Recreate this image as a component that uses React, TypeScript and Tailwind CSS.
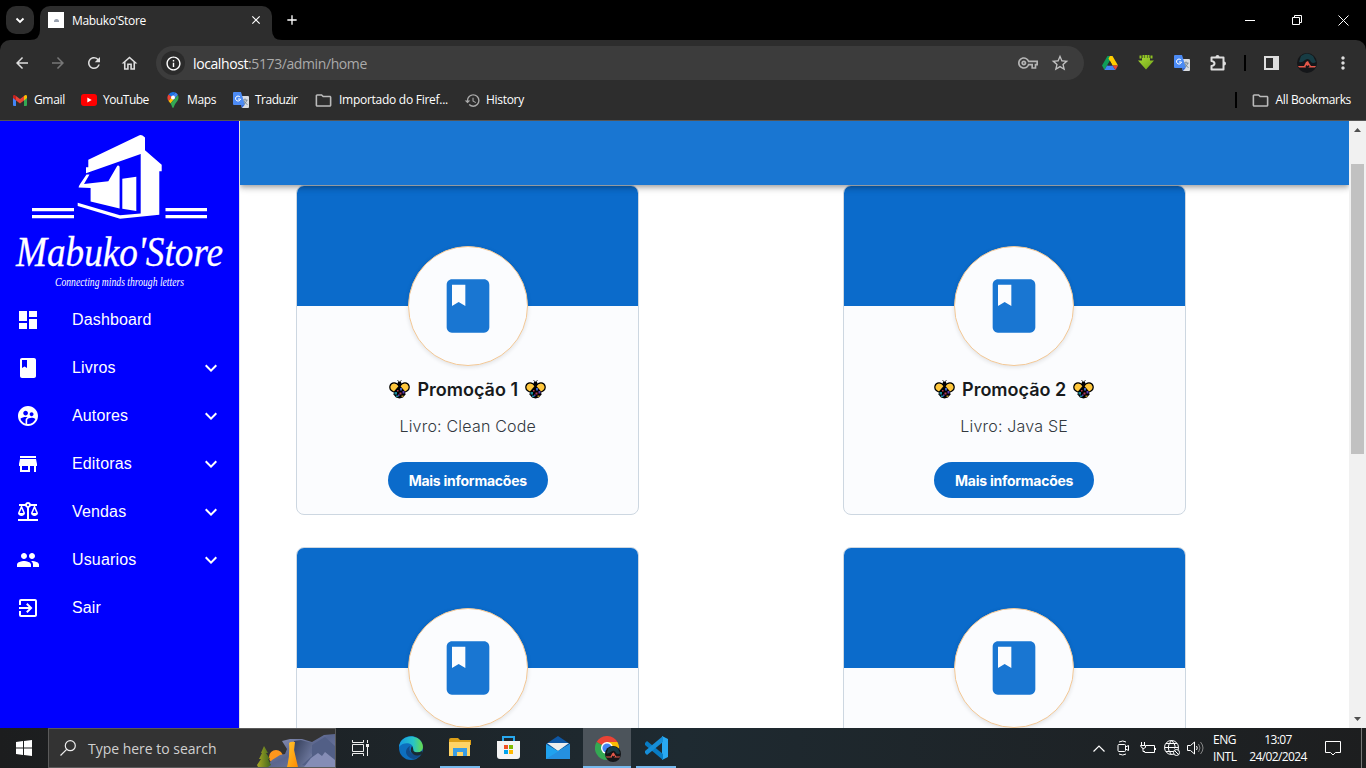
import type { ReactNode } from "react";
import {
  MdArrowBack, MdArrowForward, MdBalance, MdBook, MdClose, MdDashboard, MdExitToApp, MdExpandMore,
  MdHistory, MdInfoOutline, MdMoreVert, MdOutlineFolder, MdOutlineHome, MdPeople, MdRefresh,
  MdStarOutline, MdStore, MdSupervisedUserCircle, MdAdd, MdOutlineVpnKey,
} from "react-icons/md";

function GmailIcon() {
  return (
    <svg className="h-[11px] w-[14px]" viewBox="0 0 28 22">
      <path d="M0 4v16q0 2 2 2h4V9z" fill="#4285f4" />
      <path d="M22 9v13h4q2 0 2-2V4z" fill="#34a853" />
      <path d="M0 3v3l6 5V2C3-1 0 0 0 3z" fill="#c5221f" />
      <path d="M28 3v3l-6 5V2c3-3 6-2 6 1z" fill="#fbbc04" />
      <path d="M6 2l8 6 8-6v9l-8 6-8-6z" fill="#ea4335" />
    </svg>
  );
}

function YoutubeIcon() {
  return (
    <svg className="h-3 w-4" viewBox="0 0 16 12">
      <rect width="16" height="12" rx="3" fill="#f00" />
      <path d="M6.3 3.5v5L10.7 6z" fill="#fff" />
    </svg>
  );
}

function MapsIcon() {
  return (
    <svg className="h-4 w-3" viewBox="0 0 24 32">
      <path d="M12 0A11 11 0 0 0 3 5l6 5 8-9q-2-1-5-1z" fill="#1a73e8" />
      <path d="M3 5C0 9 0 14 3 18l7-8z" fill="#ea4335" />
      <path d="M17 1l-8 9 3 7 10-11q-2-4-5-5z" fill="#4285f4" />
      <path d="M3 18l4 5 6-7-4-5z" fill="#fbbc04" />
      <path d="M22 6c3 8-1 12-5 17-3 4-3 9-5 9s-2-5-5-9z" fill="#34a853" />
      <circle cx="12" cy="11" r="4" fill="#fff" />
    </svg>
  );
}

function TranslateIcon() {
  return (
    <svg className="size-4" viewBox="0 0 32 32">
      <path d="M12 8h18q2 0 2 2v20q0 2-2 2H18z" fill="#dadce0" />
      <path d="M2 0h14l8 26H2q-2 0-2-2V2q0-2 2-2z" fill="#4c8bf5" />
      <path d="M16 26h7l-5 6z" fill="#3367d6" />
      <path d="M14 10a5 5 0 1 0 1 4h-5" fill="none" stroke="#fff" strokeWidth="2" />
      <path d="M20 16h9M24 13v3m4 0q-2 6-7 8m1-6q2 5 7 7" fill="none" stroke="#687c8c" strokeWidth="1.7" />
    </svg>
  );
}

function DriveIcon() {
  return (
    <svg className="h-[14px] w-4" viewBox="0 0 32 28">
      <path d="M11 0h10l-5 9-6 10-5 9-5-9z" fill="#0f9d58" />
      <path d="M16 0h5l11 19H21L13 5z" fill="#ffcd00" />
      <path d="M10 19h11l6 9H5z" fill="#4285f4" />
      <path d="M27 28l-6-9h11z" fill="#ea4335" />
      <path d="M16 10l5 9H11z" fill="#2d2d2d" />
    </svg>
  );
}

function DownloadIcon() {
  return (
    <svg className="h-4 w-4" viewBox="0 0 16 16">
      <defs><linearGradient id="arrow" y2="1"><stop stopColor="#a6d834" /><stop offset="1" stopColor="#6fa318" /></linearGradient></defs>
      <path d="M4 3h8v2.500h4L8 14.500 0 5.500h4z" fill="url(#arrow)" />
      <path d="M1.500.5h2v3h-2zM4.500 0h2v3h-2zM7 0h2v3H7zM9.500 0h2v3h-2zM12.500.5h2v3h-2z" fill="#8fc322" />
    </svg>
  );
}

function ExtensionIcon() {
  return (
    <svg className="ml-[20px] h-[18px] w-[17px]" viewBox="0 0 17 18" fill="none" stroke="#dedede" strokeWidth="2">
      <path d="M1.500 3.500h12v12h-12V12q3-.5 3-2.500t-3-2.500z" strokeLinejoin="round" />
      <path d="M5.500 3a2 2 0 0 1 4 0zM14 7.500a2 2 0 0 1 0 4z" fill="#dedede" stroke="none" />
    </svg>
  );
}

function AvatarIcon({ className }: { className: string }) {
  return (
    <svg className={className} viewBox="0 0 20 20">
      <circle cx="10" cy="10" r="10" fill="#141619" />
      <path d="M4 3q6-5 12 0l3 6q-3 2-5 0-2-5-6-2-3 3-6 2z" fill="#173c44" />
      <path d="M1 13h6l2-4 2-1 1 2 2 3h5l-1 1.500H2z" fill="#e4584a" />
      <path d="M8.500 13.500l1-1.500 1 1 1.500-1 .5 1.500-1.500 1.500H9z" fill="#141619" />
    </svg>
  );
}

function StoreLogo() {
  return (
    <svg className="block h-[175px] w-[239px] shrink-0 overflow-visible" viewBox="0 0 239 175" fill="#fff">
      <path fillRule="evenodd" d="M88.300 38.700L139.500 14.200q1.500-.7 3 .4l2.500 2v12.700l16.700 14.400v6.600h-2.400v43.400L120 97.700 77.700 85v-3.300l42.300 12.500 20.700-1.700V33L86 52.300v-6h2.300z" />
      <path d="M86.500 53.500h3L84 63l24.300-2.700 9-15.600q2.300-.7 2.300 1.500v41.200l-29-7V67l-12-.5q0-1.500 1.500-3.500z" />
      <path d="M122.300 57.700l14-2V90l-14-2.300z" />
      <path d="M32 87h42v3.200H32zM32 94h42v3.200H32zM165.500 87H207v3.200h-41.500zM165.500 94H207v3.200h-41.500z" />
      <text x="16" y="145" textLength="207" lengthAdjust="spacingAndGlyphs" fontFamily="Liberation Serif, serif" fontStyle="italic" fontSize="43" stroke="#fff" strokeWidth=".3">Mabuko'Store</text>
      <text x="55" y="165" textLength="129" lengthAdjust="spacingAndGlyphs" fontFamily="Liberation Serif, serif" fontStyle="italic" fontSize="11.5">Connecting minds through letters</text>
    </svg>
  );
}

function BeeIcon() {
  return (
    <svg className="h-5 w-[21px]" viewBox="0 0 42 40">
      <path d="M20 6l-3-4M22 6l3-4" stroke="#555" strokeWidth="2" />
      <path d="M20 14C15 5 4 6 2 14s5 12 12 13h14c7-1 14-5 12-13S27 5 22 14z" fill="#ffc73c" stroke="#000" strokeWidth="2.500" />
      <circle cx="21" cy="9" r="4" />
      <path d="M21 12l7 8 4 5 1 6-5 6-7 2-7-2-5-6 1-6 4-5z" />
      <path d="M11 26h5v5h-5zM14 33h5v3h-5z" fill="#17889a" />
      <path d="M22 18h4v5h-4z" fill="#3b5dc0" />
      <path d="M21 27h4v4h-4zM16 22h3v3h-3z" fill="#b33a52" />
      <path d="M27 24h4v5h-4zM18 31h3v3h-3z" fill="#5a3bb0" />
      <path d="M25 33h4v3h-4z" fill="#b9912f" />
    </svg>
  );
}

function Bookmark({ icon, label, className }: { icon: ReactNode; label: string; className: string }) {
  return (
    <div className={`flex shrink-0 items-center whitespace-nowrap ${className}`}>
      {icon}
      <span>{label}</span>
    </div>
  );
}

function Browser() {
  return (
    <header className="h-[121px] shrink-0 bg-black font-['Open_Sans',sans-serif] text-white">
      <div className="flex h-10 items-end">
        <div className="mb-1.5 ml-1.5 flex size-7 items-center justify-center rounded-[10px] bg-[#2d2d2d]">
          <svg className="size-[10px]" viewBox="0 0 10 10"><path d="M1.500 3.500L5 7l3.500-3.500" fill="none" stroke="white" strokeWidth="1.800" /></svg>
        </div>
        <svg className="-ml-1 size-[10px]" viewBox="0 0 10 10"><path d="M10 0v10H0Q10 10 10 0" fill="#2d2d2d" /></svg>
        <div className="flex h-[34px] w-[232px] items-center rounded-t-[10px] bg-[#2d2d2d] pb-[6px] pl-2 text-[12px]">
          <div className="flex size-4 items-center justify-center bg-white"><div className="h-[3px] w-[5px] rounded-t bg-gray-400" /></div>
          <span className="ml-2 w-[177px] pt-px tracking-[-0.350px]">Mabuko'Store</span>
          <MdClose className="size-[14px]" />
        </div>
        <svg className="size-[10px]" viewBox="0 0 10 10"><path d="M0 0v10h10Q0 10 0 0" fill="#2d2d2d" /></svg>
        <MdAdd className="mb-[12px] ml-[2px] size-4" />
        <div className="mb-[14px] ml-auto mr-[17px] flex items-center">
          <div className="mr-[36px] h-px w-[10px] bg-white" />
          <svg className="mr-[35px] size-[12px]" viewBox="0 0 12 12" fill="none" stroke="#fff"><path d="M1.500 3.500h7v7h-7zM3.500 3.500v-2h7v7h-2" /></svg>
          <svg className="size-[11px]" viewBox="0 0 11 11" stroke="#fff"><path d="M.5.5l10 10M10.500.5l-10 10" /></svg>
        </div>
      </div>
      <div className="h-[81px] rounded-t-[10px] border-b border-[#555] bg-[#2d2d2d]">
        <div className="flex h-[46px] items-center pl-[13px] text-[#dedede]">
          <MdArrowBack className="size-[18px]" />
          <MdArrowForward className="ml-[18px] size-[18px] text-[#777]" />
          <MdRefresh className="ml-[18px] size-[18px]" />
          <MdOutlineHome className="ml-[17px] size-[19px]" />
          <div className="ml-[17px] flex h-[34px] w-[928px] items-center rounded-full bg-[#3c3c3c] pl-[5px]">
            <div className="flex size-6 items-center justify-center rounded-full bg-[#2b2b2b]"><MdInfoOutline className="size-[17px] text-white" /></div>
            <span className="ml-2 w-[825px] text-[14px] tracking-[-0.400px] text-[#aaa]"><span className="text-white">localhost</span>:5173/admin/home</span>
            <MdOutlineVpnKey className="size-[20px] text-[#b5b5b5]" />
            <MdStarOutline className="ml-[12px] size-[20px] text-[#c0c0c0]" />
          </div>
          <div className="ml-[18px] flex items-center">
            <DriveIcon />
            <div className="ml-5"><DownloadIcon /></div>
            <div className="ml-5"><TranslateIcon /></div>
            <ExtensionIcon />
            <div className="ml-[17px] h-4 w-[2px] bg-black" />
            <svg className="ml-[18px] h-[14px] w-[15px]" viewBox="0 0 15 14"><path d="M1 1h13v12H1z" fill="none" stroke="#ddd" strokeWidth="2" /><path d="M9 1h5v12H9z" fill="#ddd" /></svg>
            <AvatarIcon className="ml-[18px] size-5" />
            <MdMoreVert className="ml-[16px] size-[20px]" />
          </div>
        </div>
        <div className="flex h-[28px] items-center text-[12px] tracking-[-0.350px]">
          <Bookmark className="ml-[13px] w-[68px] gap-[7px]" icon={<GmailIcon />} label="Gmail" />
          <Bookmark className="w-[86px] gap-[6px] tracking-[-0.500px]" icon={<YoutubeIcon />} label="YouTube" />
          <Bookmark className="w-[66px] gap-[8px]" icon={<MapsIcon />} label="Maps" />
          <Bookmark className="w-[81px] gap-[6px] tracking-[-0.500px]" icon={<TranslateIcon />} label="Traduzir" />
          <Bookmark className="w-[150px] gap-[6px] tracking-[-0.270px]" icon={<MdOutlineFolder className="size-[19px] text-[#bbb]" />} label="Importado do Firef..." />
          <Bookmark className="gap-[5px] tracking-[-0.300px]" icon={<MdHistory className="size-[17px] text-[#aaa]" />} label="History" />
          <div className="ml-auto h-4 w-[2px] bg-black" />
          <Bookmark className="ml-[14px] mr-[15px] gap-[6px] tracking-[-0.350px]" icon={<MdOutlineFolder className="size-[19px] text-[#bbb]" />} label="All Bookmarks" />
        </div>
      </div>
    </header>
  );
}

const menu = [
  { label: "Dashboard", Icon: MdDashboard, open: false },
  { label: "Livros", Icon: MdBook, open: true },
  { label: "Autores", Icon: MdSupervisedUserCircle, open: true },
  { label: "Editoras", Icon: MdStore, open: true },
  { label: "Vendas", Icon: MdBalance, open: true },
  { label: "Usuarios", Icon: MdPeople, open: true },
  { label: "Sair", Icon: MdExitToApp, open: false },
];

function Sidebar() {
  return (
    <aside className="w-60 shrink-0 border-r border-[#e0e0e0] bg-[#0000ff] font-['Liberation_Sans',sans-serif] text-white">
      <StoreLogo />
      <nav>
        {menu.map(({ label, Icon, open }) => (
          <div key={label} className="flex h-12 items-center pl-4 pr-4">
            <Icon className="size-6" />
            <span className="ml-8 flex-1 text-[16px] leading-6 tracking-[0.150px]">{label}</span>
            {open && <MdExpandMore className="size-6" />}
          </div>
        ))}
      </nav>
    </aside>
  );
}

function PromoCard({ children }: { children?: ReactNode }) {
  return (
    <article className="flex h-[330px] w-full flex-col items-center overflow-hidden rounded-lg border border-[#cdd7e1] bg-[#fbfcfe] font-['Inter',sans-serif]">
      <div className="h-[120px] w-full shrink-0 bg-[#0b6bcb]" />
      <div className="-mt-[60px] flex size-[120px] shrink-0 items-center justify-center rounded-full border border-[#f3c896] bg-[#fbfcfe] shadow-[0_1px_4px_rgba(21,21,21,0.12)]">
        <MdBook className="size-[64px] text-[#1976d2]" />
      </div>
      {children}
    </article>
  );
}

function PromoDetails({ title, book }: { title: string; book: string }) {
  return (
    <>
      <h2 className="mt-[9px] flex h-7 items-center gap-[7px] whitespace-nowrap text-[18px] font-semibold text-[#171a1c]">
        <BeeIcon /><span>{title}</span><BeeIcon />
      </h2>
      <p className="mt-[11px] text-[16px] font-light leading-6 tracking-[0.200px] text-[#32383e]">{book}</p>
      <button className="mt-[24px] h-9 w-40 shrink-0 rounded-full bg-[#0b6bcb] pt-px text-[14px] font-bold tracking-[-0.250px] text-white">Mais informacões</button>
    </>
  );
}

function ScrollBar() {
  return (
    <div className="flex w-[17px] shrink-0 flex-col items-center bg-[#f1f1f1]">
      <svg className="h-[17px] w-[17px]" viewBox="0 0 17 17"><path d="M5 11l3.500-4 3.500 4z" fill="#505050" /></svg>
      <div className="mt-[26px] h-[290px] w-[13px] bg-[#c1c1c1]" />
      <svg className="mt-auto h-[17px] w-[17px]" viewBox="0 0 17 17"><path d="M5 6l3.500 4L12 6z" fill="#505050" /></svg>
    </div>
  );
}

function Landscape() {
  return (
    <svg className="ml-auto h-[38px] w-[79px]" viewBox="0 0 79 38">
      <defs>
        <linearGradient id="rock" x2="1" y2="1"><stop stopColor="#9aa0c4" /><stop offset=".5" stopColor="#5b668e" /><stop offset="1" stopColor="#7984ab" /></linearGradient>
        <linearGradient id="cliff" x2="1" y2=".6"><stop stopColor="#333d59" /><stop offset="1" stopColor="#7883aa" /></linearGradient>
        <linearGradient id="fall" y2="1"><stop stopColor="#ffc62d" /><stop offset="1" stopColor="#ff8b00" /></linearGradient>
        <linearGradient id="tree"><stop stopColor="#a9a923" /><stop offset="1" stopColor="#3f661d" /></linearGradient>
      </defs>
      <circle cx="20" cy="28" r="7" fill="#ff971d" />
      <path d="M10 38l6-7 8-5 5-1 2-5-5-8 8-2h12l10 3 12-7 11-1v33z" fill="url(#rock)" />
      <path d="M38 12l7-1 14 4-6 8 8 6-9 9H39z" fill="url(#cliff)" />
      <path d="M56 16l13-8 10 9v21H58l-12-2 10-9z" fill="#525f86" />
      <path d="M48 38l7-9 7-5 4 3 3-4 10 8v7z" fill="#858db6" />
      <path d="M33 14q2-2 6-1l-1 8 4 17H31q3-12 2-24z" fill="url(#fall)" />
      <path d="M8 17l4 7h-2l4 6h-2l3 6-3 2H2l-1-2 4-6H3l3-6H5z" fill="url(#tree)" />
    </svg>
  );
}

function EdgeIcon() {
  return (
    <svg className="size-6" viewBox="0 0 24 24">
      <defs><linearGradient id="edge"><stop stopColor="#159ce4" /><stop offset=".6" stopColor="#28c4c6" /><stop offset="1" stopColor="#68dc48" /></linearGradient></defs>
      <circle cx="12" cy="12" r="12" fill="#0d6fbe" />
      <path d="M0 11C1-1 18-3 23 7c3 7-2 11-8 9-3-1-1-2-1-4 0-5-9-7-14-1z" fill="url(#edge)" />
      <path d="M11 10c-7 4-4 12 4 13 3 0 7-4 7-6-5 3-14 1-11-7z" fill="#114b89" />
      <path d="M14 12q0 3 2 4 4 1 7-1v3q-5 3-9 0-4-3-1-8z" fill="#192a34" />
    </svg>
  );
}

function ExplorerIcon() {
  return (
    <svg className="h-5 w-[22px]" viewBox="0 0 22 20">
      <path d="M0 2q0-2 2-2h7l2 2h11v5H0z" fill="#dda018" />
      <path d="M0 4h21v14H0z" fill="#ffd466" />
      <path d="M4 18v-8h14v8h-4v-4H8v4z" fill="#3a9de3" />
    </svg>
  );
}

function MsStoreIcon() {
  return (
    <svg className="h-[23px] w-[23px]" viewBox="0 0 23 23">
      <path d="M6 6V1h11v5" fill="none" stroke="#28a8ee" strokeWidth="2" />
      <path d="M0 5h23v15q0 3-3 3H3q-3 0-3-3z" fill="#f4f4f4" />
      <path d="M7 9h4v4H7z" fill="#f25022" /><path d="M12 9h4v4h-4z" fill="#7fba00" />
      <path d="M7 14h4v4H7z" fill="#00a4ef" /><path d="M12 14h4v4h-4z" fill="#ffb900" />
    </svg>
  );
}

function MailIcon() {
  return (
    <svg className="h-[23px] w-6" viewBox="0 0 24 23">
      <path d="M0 8l12-8 12 8-12 7z" fill="#0e57a5" />
      <path d="M1 7h22l-11 8z" fill="#eee" />
      <path d="M0 8l12 7 12-7v15H0z" fill="#20a2ee" />
      <path d="M0 23L24 8v15z" fill="#2590df" />
    </svg>
  );
}

function ChromeIcon() {
  return (
    <div className="relative size-6">
      <svg className="size-6" viewBox="0 0 24 24">
        <path d="M12 12L1.600 6A12 12 0 0 1 22.400 6z" fill="#ea4335" />
        <path d="M12 12L1.600 6A12 12 0 0 0 12 24z" fill="#34a853" />
        <path d="M12 12V24A12 12 0 0 0 22.400 6H12z" fill="#fbbc04" />
        <circle cx="12" cy="12" r="6" fill="#fff" /><circle cx="12" cy="12" r="4.600" fill="#4285f4" />
      </svg>
      <AvatarIcon className="absolute left-[10px] top-[10px] size-4" />
    </div>
  );
}

function CodeIcon() {
  return (
    <svg className="size-6" viewBox="0 0 24 24">
      <path d="M18 0l6 3v18l-6 3z" fill="#29a9f2" />
      <path d="M1 7l2-2 16 13v6L1 9z" fill="#087cc4" />
      <path d="M1 17l2 2L19 6V0L1 15z" fill="#168ed8" />
    </svg>
  );
}

function AppButton({ children, active = false, open = false }: { children: ReactNode; active?: boolean; open?: boolean }) {
  return (
    <div className={`flex w-12 flex-col items-center ${active ? "bg-[#4c545b]" : ""}`}>
      <div className="flex h-[38px] items-center pt-px">{children}</div>
      <div className={`h-[2px] ${active ? "w-full" : "w-10"} ${open ? "bg-[#76b9ed]" : "bg-transparent"}`} />
    </div>
  );
}

function Taskbar() {
  return (
    <footer className="flex h-10 shrink-0 bg-linear-to-r from-[#1c1d1e] from-0% via-[#1e2a31] via-50% to-[#1d1e1f] to-100% font-['Open_Sans',sans-serif] text-white">
      <div className="flex w-12 items-center justify-center">
        <svg className="size-4" viewBox="0 0 16 16" fill="#fff"><path d="M0 2l7-1v6.500H0zM8 1l8-1v7.500H8zM0 8.500h7V15l-7-1zM8 8.500h8V16l-8-1z" /></svg>
      </div>
      <div className="flex w-72 items-center border border-[#5a5a5a] bg-[#333] pl-[11px]">
        <svg className="size-4" viewBox="0 0 16 16" fill="none" stroke="#eee" strokeWidth="1.200"><circle cx="10.300" cy="5.700" r="5" /><path d="M6.700 9.300L.5 15.500" /></svg>
        <span className="ml-3 whitespace-nowrap text-[14px] tracking-[-0.020px] text-[#d0d0d0]">Type here to search</span>
        <Landscape />
      </div>
      <div className="flex">
        <AppButton><svg className="h-4 w-[17px]" viewBox="0 0 17 16" fill="none" stroke="#eee"><path d="M.5 0v2.500h11V0M.5 4.500h11v7H.5zM.5 16v-2.500h11V16M15.500 0v3m0 4v9" /><path d="M14 5.500h3" strokeWidth="3" /></svg></AppButton>
        <div className="w-[3px]" />
        <AppButton><EdgeIcon /></AppButton>
        <div className="w-[1px]" />
        <AppButton open><ExplorerIcon /></AppButton>
        <AppButton><MsStoreIcon /></AppButton>
        <div className="w-[2px]" />
        <AppButton><MailIcon /></AppButton>
        <div className="w-[1px]" />
        <AppButton open active><ChromeIcon /></AppButton>
        <div className="w-[1px]" />
        <AppButton open><CodeIcon /></AppButton>
      </div>
      <div className="ml-auto flex items-center text-[12px]">
        <svg className="h-[7px] w-3" viewBox="0 0 12 7" fill="none" stroke="#fff" strokeWidth="1.200"><path d="M.5 6.500L6 1l5.500 5.500" /></svg>
        <svg className="ml-3 h-4 w-3" viewBox="0 0 12 16" fill="none" stroke="#fff"><rect x="1" y="4.500" width="7.500" height="7" rx="1" /><path d="M8.500 7l3-1.500v5l-3-1.500M2 2q4-2 7 0M2 14q4 2 7 0" /></svg>
        <svg className="ml-[11px] h-3 w-4" viewBox="0 0 16 12" fill="none" stroke="#fff"><path d="M6 3.500h8.500v7H4.500M15.500 6v2M1.500 0v3m3-3v3M.5 3.500h5v2q-2 2-4 0zM3 6v3.500h2" /></svg>
        <svg className="ml-[8px] size-4" viewBox="0 0 16 16" fill="none" stroke="#fff"><circle cx="7.500" cy="7.500" r="7" /><path d="M.5 7.500h14M2 3.500h11M2 11.500h8M7.500.5Q1 7.500 7.500 14.500M7.500.5q5 5 3 8" /><circle cx="12.500" cy="12.500" r="3" fill="#20262a" /><path d="M10.500 10.500l4 4" /></svg>
        <svg className="ml-[7px] h-[14px] w-[17px]" viewBox="0 0 17 14" fill="none" stroke="#fff"><path d="M.5 4.500h3l4-3.500v12l-4-3.500h-3zM9.500 5q1.500 2 0 4" /><path d="M11.500 3q3 4 0 8M13.500 1q5 6 0 12" stroke="#888" /></svg>
        <div className="ml-[9px] w-[25px] text-[12px] leading-[17px] tracking-[-0.450px]"><div>ENG</div><div>INTL</div></div>
        <div className="ml-[9px] w-[62px] whitespace-nowrap text-center text-[12px] leading-[17px] tracking-[-0.620px]"><div>13:07</div><div>24/02/2024</div></div>
        <svg className="ml-[16px] size-4" viewBox="0 0 16 16" fill="none" stroke="#fff"><path d="M.5 1.500h15v11h-5L8 15l-2.500-2.500h-5z" /></svg>
        <div className="ml-[20px] mr-1 h-10 w-px bg-[#777]" />
      </div>
    </footer>
  );
}

export default function App() {
  return (
    <div className="flex h-[768px] w-[1366px] flex-col overflow-hidden bg-white">
      <Browser />
      <div className="flex min-h-0 flex-1">
        <Sidebar />
        <main className="flex min-w-0 flex-1 flex-col overflow-hidden">
          <div className="z-10 h-16 shrink-0 bg-[#1976d2] shadow-[0_2px_4px_-1px_rgba(0,0,0,0.2),0_4px_5px_rgba(0,0,0,0.14),0_1px_10px_rgba(0,0,0,0.12)]" />
          <div className="grid grid-cols-[342.9px_342.9px] gap-x-[203.5px] gap-y-8 pl-[56.3px]">
            <PromoCard><PromoDetails title="Promoção 1" book="Livro: Clean Code" /></PromoCard>
            <PromoCard><PromoDetails title="Promoção 2" book="Livro: Java SE" /></PromoCard>
            <PromoCard />
            <PromoCard />
          </div>
        </main>
        <ScrollBar />
      </div>
      <Taskbar />
    </div>
  );
}
